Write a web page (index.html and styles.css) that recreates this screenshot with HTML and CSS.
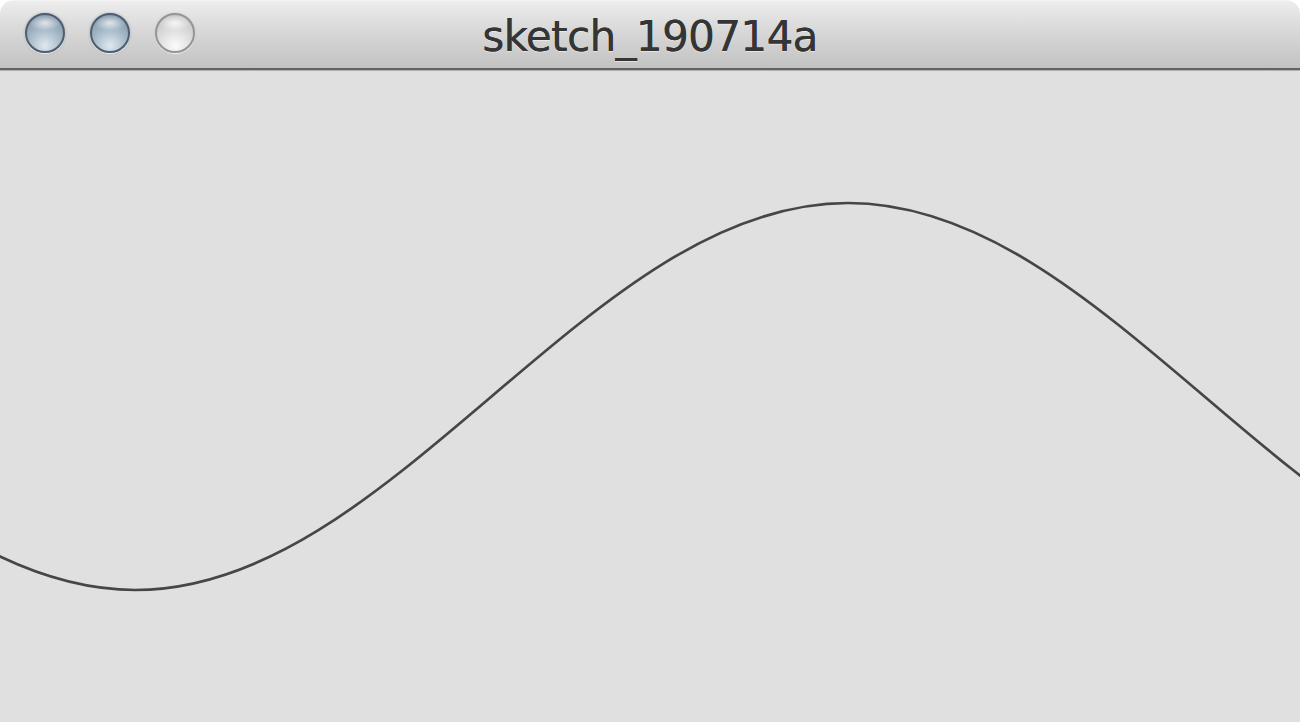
FILE: index.html
```html
<!DOCTYPE html>
<html lang="en">
<head>
  <meta charset="UTF-8" />
  <meta name="viewport" content="width=device-width, initial-scale=1.0" />
  <title>sketch_190714a</title>
  <link rel="stylesheet" href="styles.css">
</head>
<body>
  <div class="window">
    <div class="titlebar">
      <div class="lights">
        <span class="light"></span>
        <span class="light"></span>
        <span class="light off"></span>
      </div>
      <div class="title">sketch_190714a</div>
      <div></div>
    </div>
    <div class="canvas">
      <!-- one period of the sine, drawn in page coordinates -->
      <svg class="wave" viewBox="0 70 1300 652" preserveAspectRatio="none">
        <path d="M -221.5 396.5
                 C -105.2 495.6, 6 590, 135 590
                 C 264 590, 375.2 495.6, 491.5 396.5
                 C 607.8 297.4, 719 203, 848 203
                 C 977 203, 1088.2 297.4, 1204.5 396.5
                 C 1320.8 495.6, 1432 590, 1561 590" />
      </svg>
    </div>
  </div>
</body>
</html>
```

FILE: styles.css
```css
* {
  box-sizing: border-box;
  margin: 0;
  padding: 0;
}

body {
  background: #ffffff;
  height: 100vh;
  overflow: hidden;
}

.window {
  height: 100vh;
  display: flex;
  flex-direction: column;
  border-radius: 14px 14px 0 0;
  overflow: hidden;
}

.titlebar {
  height: 70px;
  flex-shrink: 0;
  display: grid;
  grid-template-columns: 1fr auto 1fr;
  align-items: center;
  background: linear-gradient(#ededed, #dadada 40%, #c2c2c2);
  border-top: 1px solid #f4f4f4;
  border-bottom: 2px solid #626262;
  box-shadow: 0 1px 0 #b0b0b0;
  position: relative;
  z-index: 1;
}

.lights {
  display: flex;
  gap: 25px;
  padding-left: 25px;
  padding-bottom: 3px;
}

.light {
  width: 40px;
  height: 40px;
  border-radius: 50%;
  border: 2.5px solid #4c5e6f;
  background:
    radial-gradient(ellipse 55% 28% at 50% 22%, rgba(255,255,255,0.7), rgba(255,255,255,0) 80%),
    radial-gradient(circle at 50% 85%, #dfe8ef 0, #a2b6c5 50%, #7a8fa1 95%);
  box-shadow: 0 1px 1px rgba(255,255,255,0.8), 0 0 3px rgba(0,0,0,0.25);
}

.light.off {
  border-color: #959595;
  background:
    radial-gradient(ellipse 55% 28% at 50% 22%, rgba(255,255,255,0.8), rgba(255,255,255,0) 80%),
    radial-gradient(circle at 50% 85%, #fbfbfb 0, #d8d8d8 55%, #bfbfbf 95%);
  box-shadow: 0 1px 1px rgba(255,255,255,0.8), 0 0 2px rgba(0,0,0,0.15);
}

.title {
  font-family: "DejaVu Sans", Verdana, sans-serif;
  font-size: 42px;
  letter-spacing: -0.6px;
  color: #353535;
  text-shadow: 0.3px 0 0 #353535, 0 1px 0 rgba(255,255,255,0.5);
  padding-top: 4px;
}

.canvas {
  flex: 1;
  background: #e0e0e0;
}

.wave {
  display: block;
  width: 100%;
  height: 100%;
}

.wave path {
  fill: none;
  stroke: #464646;
  stroke-width: 2.7;
}
```
